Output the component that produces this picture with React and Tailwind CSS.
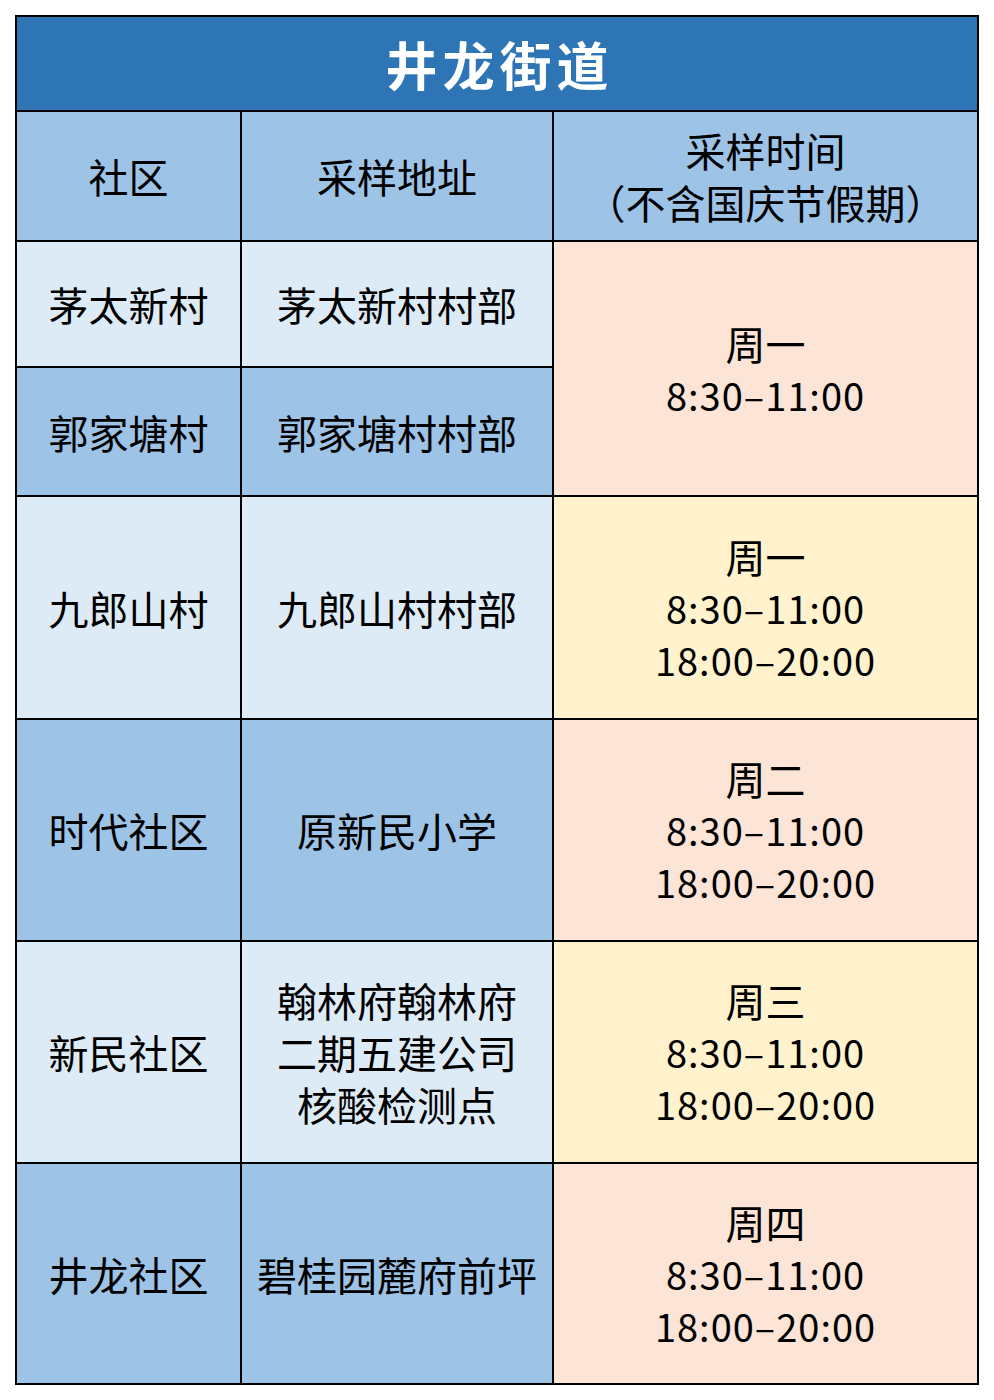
import React from 'react';

const font = { fontFamily: '"Noto Sans CJK SC", "Noto Sans", sans-serif' };

const rows = [
  { name: '茅太新村', addr: ['茅太新村村部'], bg: 'bg-[#ddebf7]', h: 'h-[126px]' },
  { name: '郭家塘村', addr: ['郭家塘村村部'], bg: 'bg-[#9dc3e6]', h: 'h-[129px]' },
  { name: '九郎山村', addr: ['九郎山村村部'], bg: 'bg-[#ddebf7]', h: 'h-[223px]', day: '周一', eve: true, tbg: 'bg-[#fff2cc]' },
  { name: '时代社区', addr: ['原新民小学'], bg: 'bg-[#9dc3e6]', h: 'h-[222px]', day: '周二', eve: true, tbg: 'bg-[#fce4d6]' },
  { name: '新民社区', addr: ['翰林府翰林府', '二期五建公司', '核酸检测点'], bg: 'bg-[#ddebf7]', h: 'h-[222px]', day: '周三', eve: true, tbg: 'bg-[#fff2cc]' },
  { name: '井龙社区', addr: ['碧桂园麓府前坪'], bg: 'bg-[#9dc3e6]', h: 'h-[221px]', day: '周四', eve: true, tbg: 'bg-[#fce4d6]' },
];

function Time({ day, eve }) {
  return (
    <div className="flex flex-col items-center leading-[52px]">
      <div>{day}</div>
      <div className="tracking-[1px] text-[38px]">8:30–11:00</div>
      {eve && <div className="tracking-[1px] text-[38px]">18:00–20:00</div>}
    </div>
  );
}

export default function App() {
  return (
    <div className="bg-white w-[994px] h-[1400px] pt-[15px] pl-[15px]" style={font}>
      <table className="border-collapse border-2 border-black table-fixed w-[962px] text-[40px] text-black">
        <colgroup>
          <col className="w-[225px]" />
          <col className="w-[312px]" />
          <col className="w-[425px]" />
        </colgroup>
        <tbody>
          <tr className="h-[95px]">
            <td colSpan={3} className="bg-[#2e75b6] border-2 border-black text-center text-white font-bold text-[52px] tracking-[5px] pl-[5px]">
              井龙街道
            </td>
          </tr>
          <tr className="h-[130px] bg-[#9dc3e6]">
            <td className="border-2 border-black text-center">社区</td>
            <td className="border-2 border-black text-center">采样地址</td>
            <td className="border-2 border-black text-center leading-[52px]">
              <div>采样时间</div>
              <div>（不含国庆节假期）</div>
            </td>
          </tr>
          {rows.map((r, i) => (
            <tr key={i} className={r.h}>
              <td className={`${r.bg} border-2 border-black text-center`}>{r.name}</td>
              <td className={`${r.bg} border-2 border-black text-center leading-[52px]`}>
                {r.addr.map((a) => (
                  <div key={a}>{a}</div>
                ))}
              </td>
              {i === 0 && (
                <td rowSpan={2} className="bg-[#fce4d6] border-2 border-black text-center">
                  <Time day="周一" />
                </td>
              )}
              {i > 1 && (
                <td className={`${r.tbg} border-2 border-black text-center`}>
                  <Time day={r.day} eve={r.eve} />
                </td>
              )}
            </tr>
          ))}
        </tbody>
      </table>
    </div>
  );
}
